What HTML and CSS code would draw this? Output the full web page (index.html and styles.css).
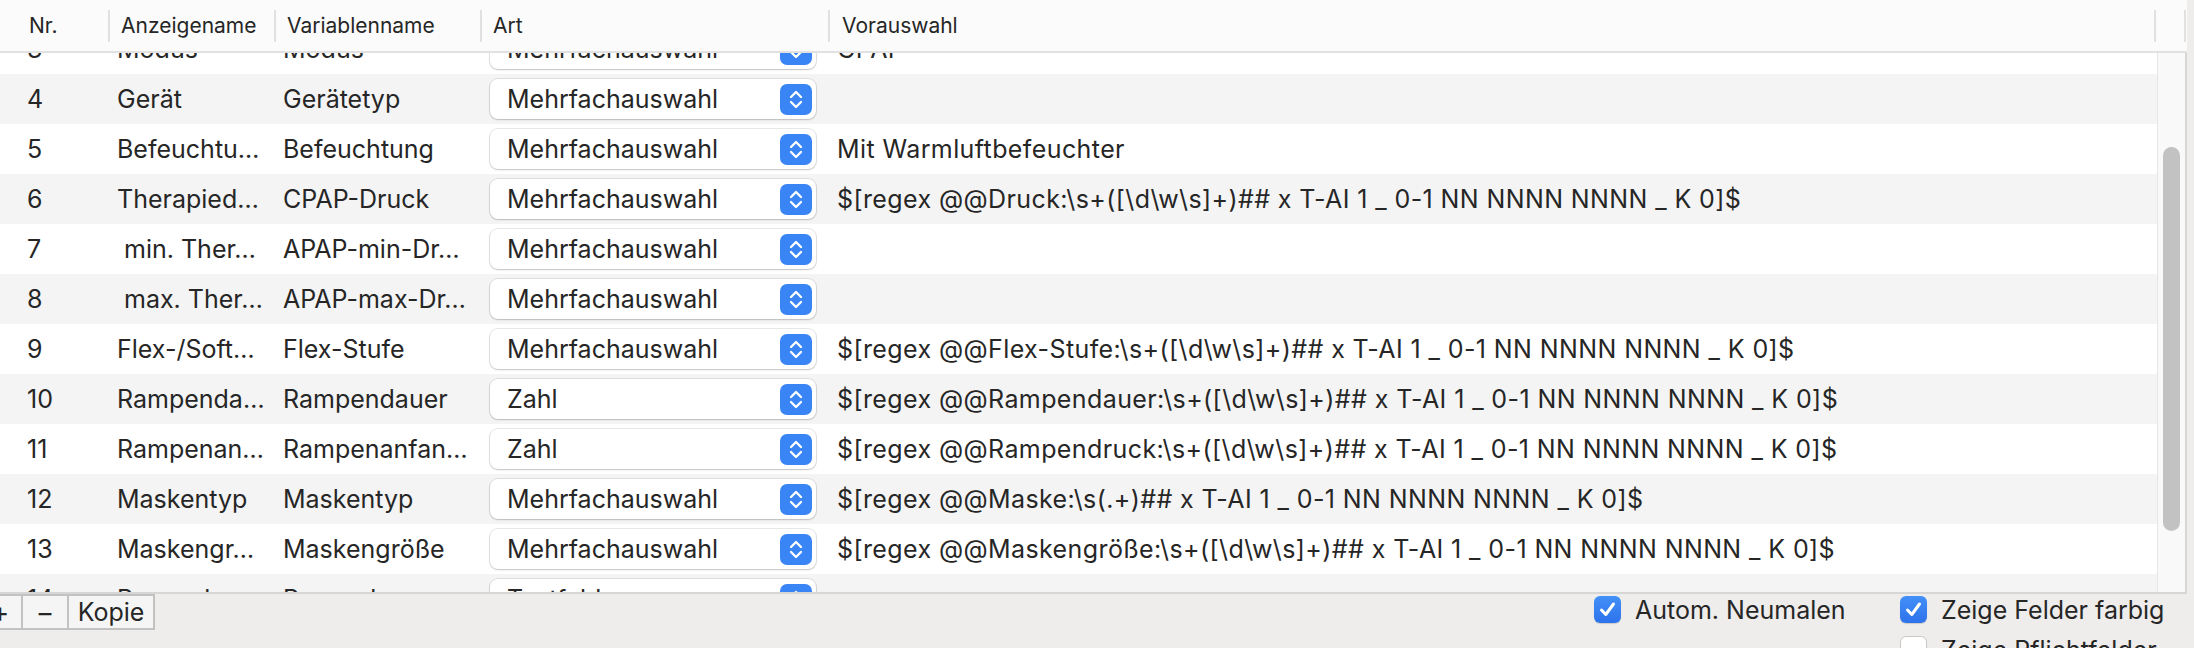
FILE: index.html
```html
<!DOCTYPE html>
<html lang="de">
<head>
<meta charset="utf-8">
<title>Felder</title>
<link rel="stylesheet" href="styles.css">
</head>
<body>
<div class="window">
  <div class="table">
    <div class="thead">
      <div class="th c1">Nr.</div><span class="sep"></span>
      <div class="th c2">Anzeigename</div><span class="sep"></span>
      <div class="th c3">Variablenname</div><span class="sep"></span>
      <div class="th c4">Art</div><span class="sep"></span>
      <div class="th c5">Vorauswahl</div><span class="sep"></span>
      <div class="th c6"></div><span class="sep"></span>
    </div>
    <div class="tbody">
      <div class="rows">
        <div class="row"><div class="td">3</div><div class="td">Modus</div><div class="td">Modus</div><div class="td sel"><div class="select"><span>Mehrfachauswahl</span><svg class="stepper" viewBox="0 0 32 31" width="32" height="31"><rect width="32" height="31" rx="7" class="stepbg"/><path d="M11 13 L16 8 L21 13 M11 18 L16 23 L21 18" class="chev"/></svg></div></div><div class="td pre">CPAP</div></div>
        <div class="row"><div class="td">4</div><div class="td">Gerät</div><div class="td">Gerätetyp</div><div class="td sel"><div class="select"><span>Mehrfachauswahl</span><svg class="stepper" viewBox="0 0 32 31" width="32" height="31"><rect width="32" height="31" rx="7" class="stepbg"/><path d="M11 13 L16 8 L21 13 M11 18 L16 23 L21 18" class="chev"/></svg></div></div><div class="td pre"></div></div>
        <div class="row"><div class="td">5</div><div class="td">Befeuchtu…</div><div class="td">Befeuchtung</div><div class="td sel"><div class="select"><span>Mehrfachauswahl</span><svg class="stepper" viewBox="0 0 32 31" width="32" height="31"><rect width="32" height="31" rx="7" class="stepbg"/><path d="M11 13 L16 8 L21 13 M11 18 L16 23 L21 18" class="chev"/></svg></div></div><div class="td pre">Mit Warmluftbefeuchter</div></div>
        <div class="row"><div class="td">6</div><div class="td">Therapied…</div><div class="td">CPAP-Druck</div><div class="td sel"><div class="select"><span>Mehrfachauswahl</span><svg class="stepper" viewBox="0 0 32 31" width="32" height="31"><rect width="32" height="31" rx="7" class="stepbg"/><path d="M11 13 L16 8 L21 13 M11 18 L16 23 L21 18" class="chev"/></svg></div></div><div class="td pre">$[regex @@Druck:\s+([\d\w\s]+)## x T-AI 1 _ 0-1 NN NNNN NNNN _ K 0]$</div></div>
        <div class="row"><div class="td">7</div><div class="td indent">min. Ther…</div><div class="td">APAP-min-Dr…</div><div class="td sel"><div class="select"><span>Mehrfachauswahl</span><svg class="stepper" viewBox="0 0 32 31" width="32" height="31"><rect width="32" height="31" rx="7" class="stepbg"/><path d="M11 13 L16 8 L21 13 M11 18 L16 23 L21 18" class="chev"/></svg></div></div><div class="td pre"></div></div>
        <div class="row"><div class="td">8</div><div class="td indent">max. Ther…</div><div class="td">APAP-max-Dr…</div><div class="td sel"><div class="select"><span>Mehrfachauswahl</span><svg class="stepper" viewBox="0 0 32 31" width="32" height="31"><rect width="32" height="31" rx="7" class="stepbg"/><path d="M11 13 L16 8 L21 13 M11 18 L16 23 L21 18" class="chev"/></svg></div></div><div class="td pre"></div></div>
        <div class="row"><div class="td">9</div><div class="td">Flex-/Soft…</div><div class="td">Flex-Stufe</div><div class="td sel"><div class="select"><span>Mehrfachauswahl</span><svg class="stepper" viewBox="0 0 32 31" width="32" height="31"><rect width="32" height="31" rx="7" class="stepbg"/><path d="M11 13 L16 8 L21 13 M11 18 L16 23 L21 18" class="chev"/></svg></div></div><div class="td pre">$[regex @@Flex-Stufe:\s+([\d\w\s]+)## x T-AI 1 _ 0-1 NN NNNN NNNN _ K 0]$</div></div>
        <div class="row"><div class="td">10</div><div class="td">Rampenda…</div><div class="td">Rampendauer</div><div class="td sel"><div class="select"><span>Zahl</span><svg class="stepper" viewBox="0 0 32 31" width="32" height="31"><rect width="32" height="31" rx="7" class="stepbg"/><path d="M11 13 L16 8 L21 13 M11 18 L16 23 L21 18" class="chev"/></svg></div></div><div class="td pre">$[regex @@Rampendauer:\s+([\d\w\s]+)## x T-AI 1 _ 0-1 NN NNNN NNNN _ K 0]$</div></div>
        <div class="row"><div class="td">11</div><div class="td">Rampenan…</div><div class="td">Rampenanfan…</div><div class="td sel"><div class="select"><span>Zahl</span><svg class="stepper" viewBox="0 0 32 31" width="32" height="31"><rect width="32" height="31" rx="7" class="stepbg"/><path d="M11 13 L16 8 L21 13 M11 18 L16 23 L21 18" class="chev"/></svg></div></div><div class="td pre">$[regex @@Rampendruck:\s+([\d\w\s]+)## x T-AI 1 _ 0-1 NN NNNN NNNN _ K 0]$</div></div>
        <div class="row"><div class="td">12</div><div class="td">Maskentyp</div><div class="td">Maskentyp</div><div class="td sel"><div class="select"><span>Mehrfachauswahl</span><svg class="stepper" viewBox="0 0 32 31" width="32" height="31"><rect width="32" height="31" rx="7" class="stepbg"/><path d="M11 13 L16 8 L21 13 M11 18 L16 23 L21 18" class="chev"/></svg></div></div><div class="td pre">$[regex @@Maske:\s(.+)## x T-AI 1 _ 0-1 NN NNNN NNNN _ K 0]$</div></div>
        <div class="row"><div class="td">13</div><div class="td">Maskengr…</div><div class="td">Maskengröße</div><div class="td sel"><div class="select"><span>Mehrfachauswahl</span><svg class="stepper" viewBox="0 0 32 31" width="32" height="31"><rect width="32" height="31" rx="7" class="stepbg"/><path d="M11 13 L16 8 L21 13 M11 18 L16 23 L21 18" class="chev"/></svg></div></div><div class="td pre">$[regex @@Maskengröße:\s+([\d\w\s]+)## x T-AI 1 _ 0-1 NN NNNN NNNN _ K 0]$</div></div>
        <div class="row"><div class="td">14</div><div class="td">Pausenl…</div><div class="td">Pausenl…</div><div class="td sel"><div class="select"><span>Textfeld</span><svg class="stepper" viewBox="0 0 32 31" width="32" height="31"><rect width="32" height="31" rx="7" class="stepbg"/><path d="M11 13 L16 8 L21 13 M11 18 L16 23 L21 18" class="chev"/></svg></div></div><div class="td pre"></div></div>
      </div>
      <div class="track"><div class="thumb"></div></div>
    </div>
  </div>
  <div class="bottombar">
    <div class="segbtns">
      <button class="seg plus">+</button><button class="seg minus">−</button><button class="seg copy">Kopie</button>
    </div>
    <div class="spacer"></div>
    <div class="checkcol col1">
      <label class="check"><span class="box on"><svg viewBox="0 0 27 27" width="27" height="27"><path d="M7.5 14 L11.8 18.5 L19.5 8" class="tick"/></svg></span><span>Autom. Neumalen</span></label>
    </div>
    <div class="checkcol col2">
      <label class="check"><span class="box on"><svg viewBox="0 0 27 27" width="27" height="27"><path d="M7.5 14 L11.8 18.5 L19.5 8" class="tick"/></svg></span><span>Zeige Felder farbig</span></label>
      <label class="check"><span class="box off"></span><span>Zeige Pflichtfelder</span></label>
    </div>
  </div>
</div>
</body>
</html>
```
FILE: styles.css
```css
html, body {
  margin: 0;
  padding: 0;
}
body {
  background: #eeedec;
  font-family: "Inter", "Liberation Sans", "Noto Sans", sans-serif;
  color: #262626;
  width: 2194px;
  height: 648px;
  overflow: hidden;
}
.window {
  display: flex;
  flex-direction: column;
  height: 648px;
  overflow: hidden;
}
.table {
  width: 2187px;
  height: 594px;
  display: flex;
  flex-direction: column;
  background: #fff;
  border-bottom: 2px solid #d6d6d6;
  box-sizing: border-box;
  flex: none;
}
.thead {
  height: 51px;
  flex: none;
  display: flex;
  align-items: center;
  background: #fbfbfb;
  border-bottom: 2px solid #e1e1e1;
  font-size: 21px;
}
.th {
  white-space: nowrap;
  overflow: hidden;
  box-sizing: border-box;
  padding-left: 11px;
}
.th.c1 { width: 108px; padding-left: 29px; }
.th.c2 { width: 164px; }
.th.c3 { width: 204px; }
.th.c4 { width: 346px; }
.th.c5 { width: 1324px; padding-left: 12px; }
.th.c6 { width: 28px; }
.sep {
  width: 2px;
  height: 32px;
  background: #e0e0e0;
  flex: none;
}
.tbody {
  flex: 1;
  display: flex;
  overflow: hidden;
}
.rows {
  width: 2157px;
  flex: none;
  margin-top: -29px;
  font-size: 25px;
}
.row {
  display: grid;
  grid-template-columns: 109px 166px 206px 348px 1328px;
  height: 50px;
  align-items: center;
  background: #ffffff;
}
.row:nth-child(even) {
  background: #f4f4f4;
}
.td {
  white-space: nowrap;
  overflow: hidden;
  padding-left: 8px;
  box-sizing: border-box;
}
.td:first-child {
  padding-left: 27px;
}
.td.indent {
  padding-left: 15px;
}
.td.pre {
  letter-spacing: 0.4px;
}
.td.sel {
  padding-left: 9px;
  overflow: visible;
}
.select {
  width: 326px;
  height: 40px;
  box-sizing: border-box;
  background: #fff;
  border-radius: 8px;
  box-shadow: 0 0 0 1px rgba(0,0,0,0.09), 0 1px 2px rgba(0,0,0,0.16);
  display: flex;
  align-items: center;
  justify-content: space-between;
  padding: 0 4px 0 17px;
}
.stepper {
  display: block;
  flex: none;
}
.stepbg {
  fill: #3a85f6;
}
.chev {
  fill: none;
  stroke: #fff;
  stroke-width: 2.3;
  stroke-linecap: round;
  stroke-linejoin: round;
}
.track {
  width: 30px;
  flex: none;
  box-sizing: border-box;
  background: #f9f9f9;
  border-left: 1px solid #e6e6e6;
  border-right: 2px solid #d6d6d6;
  padding-top: 94px;
  display: flex;
  justify-content: center;
}
.thumb {
  width: 17px;
  height: 384px;
  border-radius: 9px;
  background: #c2c2c2;
  margin-right: 1px;
}
.bottombar {
  flex: 1;
  display: flex;
  align-items: flex-start;
  font-size: 25px;
}
.segbtns {
  display: flex;
  margin-left: -23px;
  height: 36px;
}
.seg {
  font: inherit;
  color: #262626;
  background: #f5f5f5;
  border: 2px solid #c2c2c2;
  border-left-width: 0;
  height: 36px;
  padding: 0;
  margin: 0;
  line-height: 1;
  display: flex;
  align-items: center;
  justify-content: center;
  box-sizing: border-box;
}
.seg.plus { width: 46px; border-left-width: 2px; font-size: 28px; }
.seg.minus { width: 46px; font-size: 28px; }
.seg.copy { width: 86px; }
.spacer {
  flex: 1;
}
.checkcol {
  display: flex;
  flex-direction: column;
  gap: 13px;
  padding-top: 2px;
  flex: none;
}
.col1 { width: 306px; }
.col2 { width: 294px; }
.check {
  display: flex;
  align-items: center;
  height: 27px;
  gap: 14px;
  white-space: nowrap;
}
.box {
  width: 27px;
  height: 27px;
  border-radius: 6px;
  box-sizing: border-box;
  flex: none;
  display: block;
}
.box svg {
  display: block;
}
.box.on {
  background: linear-gradient(#4290f8, #2d72ea);
  box-shadow: 0 1px 1px rgba(0,0,0,0.15);
}
.box.off {
  background: #fff;
  border: 1px solid #c9c9c9;
  box-shadow: 0 1px 1px rgba(0,0,0,0.1);
}
.tick {
  fill: none;
  stroke: #fff;
  stroke-width: 3;
  stroke-linecap: round;
  stroke-linejoin: round;
}
```
